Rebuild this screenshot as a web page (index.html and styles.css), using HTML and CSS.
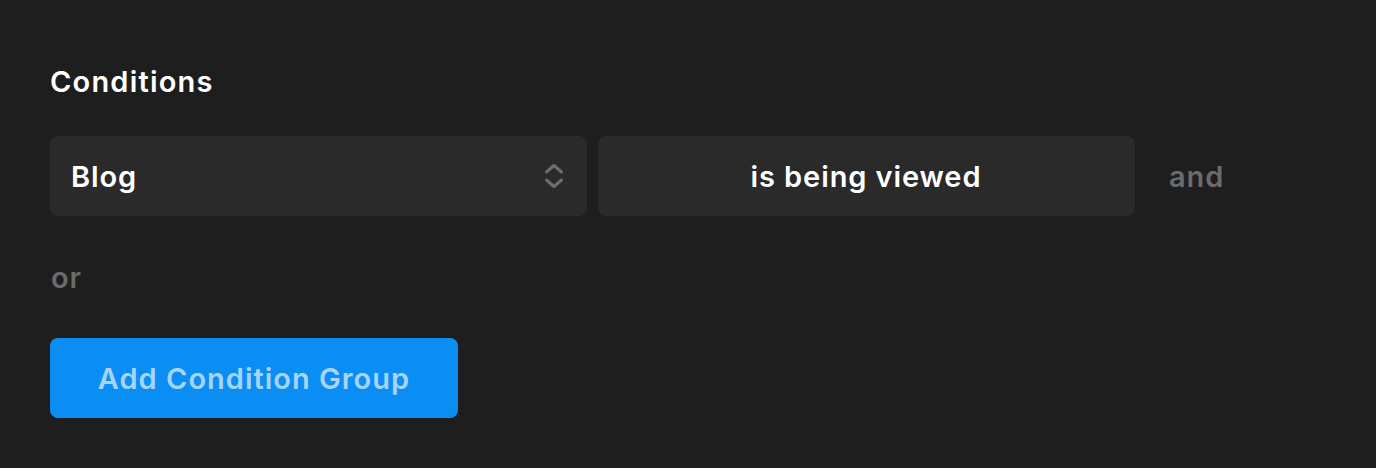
FILE: index.html
```html
<!DOCTYPE html>
<html lang="en">
<head>
  <meta charset="UTF-8" />
  <title>Conditions</title>
  <link rel="stylesheet" href="styles.css">
</head>
<body>
  <div class="panel">
    <h2 class="title">Conditions</h2>

    <div class="row">
      <div class="select">
        <span>Blog</span>
        <svg class="chevrons" width="22" height="28" viewBox="0 0 22 28">
          <path d="M3.5 10 L11 3.5 L18.5 10" fill="none" stroke="#6e6e6e" stroke-width="3" stroke-linecap="round" stroke-linejoin="round"/>
          <path d="M3.5 18 L11 24.5 L18.5 18" fill="none" stroke="#6e6e6e" stroke-width="3" stroke-linecap="round" stroke-linejoin="round"/>
        </svg>
      </div>
      <div class="select center">is being viewed</div>
      <span class="joiner">and</span>
    </div>

    <div class="or">or</div>

    <button class="add-btn">Add Condition Group</button>
  </div>
</body>
</html>
```

FILE: styles.css
```css
html, body { margin: 0; background: #1e1e1e; }
body { font-family: Inter, "Noto Sans", sans-serif; color: #fff; letter-spacing: 0.9px; }
.panel { padding: 63px 50px 0; }
.title { font-size: 29px; font-weight: 600; margin: 0 0 35px; line-height: 38px; letter-spacing: 1.2px; }
.row { display: flex; align-items: center; gap: 11px; }
.select { width: 537px; height: 80px; box-sizing: border-box; background: #2a2a2a; border-radius: 8px; display: flex; align-items: center; justify-content: space-between; padding: 0 22px 0 21px; font-size: 29px; font-weight: 600; }
.select.center { justify-content: center; }
.chevrons { display: block; }
.joiner { margin-left: 23px; font-size: 29px; font-weight: 600; color: #6b6b6b; }
.or { margin: 42px 0 0 1px; font-size: 29px; font-weight: 600; color: #6b6b6b; line-height: 40px; }
.add-btn { margin-top: 40px; width: 408px; height: 80px; border: none; border-radius: 8px; background: #0a8ef4; color: #a6d4fb; font-family: inherit; font-size: 29px; font-weight: 600; letter-spacing: 1px; }
```
